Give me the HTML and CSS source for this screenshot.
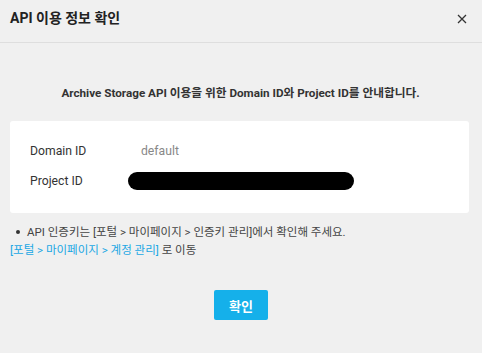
FILE: index.html
```html
<!DOCTYPE html>
<html lang="ko">
<head>
    <meta charset="UTF-8">
    <title>API 이용 정보 확인</title>
    <link rel="stylesheet" href="styles.css">
</head>
<body>
    <div class="modal">
        <div class="modal-header">
            <h1>API 이용 정보 확인</h1>
            <button type="button" class="close-btn" aria-label="닫기">
                <svg width="10" height="10" viewBox="0 0 10 10"><path d="M1 1L9 9M9 1L1 9" stroke="#333" stroke-width="1.3" fill="none"/></svg>
            </button>
        </div>

        <div class="modal-body">
            <p class="intro">Archive Storage API 이용을 위한 Domain ID와 Project ID를 안내합니다.</p>

            <div class="info-card">
                <div class="info-row">
                    <span class="info-label">Domain ID</span>
                    <span class="info-value">default</span>
                </div>
                <div class="info-row">
                    <span class="info-label">Project ID</span>
                    <span class="redacted"></span>
                </div>
            </div>

            <ul class="notes">
                <li>API 인증키는 [포털 &gt; 마이페이지 &gt; 인증키 관리]에서 확인해 주세요.</li>
            </ul>
            <p class="link-line"><a href="#">[포털 &gt; 마이페이지 &gt; 계정 관리]</a> 로 이동</p>

            <div class="actions">
                <button type="button" class="btn-primary">확인</button>
            </div>
        </div>
    </div>
</body>
</html>
```

FILE: styles.css
```css
* {
    margin: 0;
    padding: 0;
    box-sizing: border-box;
}

body {
    font-family: Roboto, 'Noto Sans CJK KR', sans-serif;
    background: #f0f0f0;
    color: #333;
}

.modal {
    width: 482px;
    height: 353px;
}

.modal-header {
    height: 43px;
    border-bottom: 1px solid #dedede;
    display: flex;
    align-items: center;
    justify-content: space-between;
    padding: 0 14px 0 10px;
}

.modal-header h1 {
    font-size: 14px;
    font-weight: 700;
    color: #222;
    margin-top: -9px;
}

.close-btn {
    background: none;
    border: none;
    width: 12px;
    height: 12px;
    display: flex;
    align-items: center;
    justify-content: center;
    margin-top: -4px;
    cursor: pointer;
}

.modal-body {
    padding: 42px 13px 0 10px;
}

.intro {
    text-align: center;
    font-size: 11.7px;
    font-weight: 700;
    color: #333;
    line-height: 16px;
    padding-left: 2px;
}

.info-card {
    background: #fff;
    border-radius: 3px;
    margin-top: 20px;
    padding: 15px 20px 17px;
}

.info-row {
    display: flex;
    align-items: center;
    height: 30px;
    font-size: 12.2px;
}

.info-label {
    width: 111px;
    color: #333;
}

.info-value {
    color: #888;
}

.redacted {
    display: block;
    width: 226px;
    height: 18px;
    background: #000;
    border-radius: 9px;
    margin-left: -13px;
}

.notes {
    list-style: none;
    margin-top: 10px;
    font-size: 11.5px;
    line-height: 18px;
    color: #444;
}

.notes li {
    position: relative;
    padding-left: 17px;
}

.notes li::before {
    content: '';
    position: absolute;
    left: 6px;
    top: 7px;
    width: 4px;
    height: 4px;
    border-radius: 50%;
    background: #333;
}

.link-line {
    font-size: 11.5px;
    line-height: 18px;
    color: #444;
}

.link-line a {
    color: #1aa7e4;
    text-decoration: none;
}

.actions {
    display: flex;
    justify-content: center;
    margin-top: 31px;
    padding-left: 3px;
}

.btn-primary {
    width: 54px;
    height: 30px;
    background: #15b0ea;
    color: #fff;
    border: none;
    border-radius: 2px;
    font-family: inherit;
    font-size: 13px;
    font-weight: 700;
    cursor: pointer;
}
```
